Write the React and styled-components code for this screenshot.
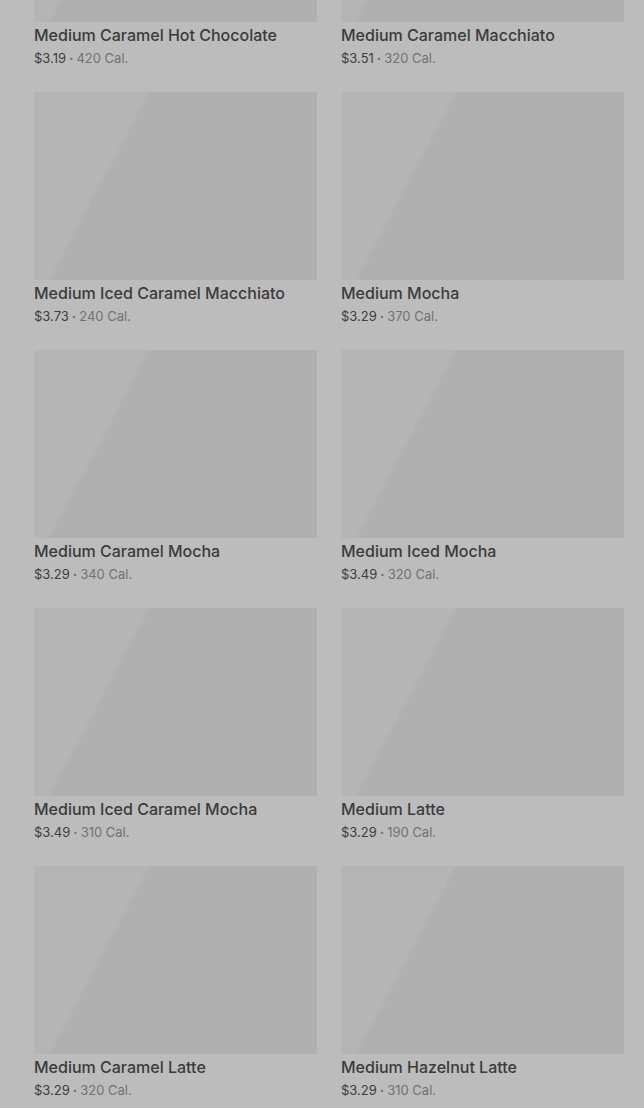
import React from "react"
import styled, { createGlobalStyle } from "styled-components"

const GlobalStyle = createGlobalStyle`
  html, body {
    margin: 0;
    padding: 0;
    background: #bcbcbc;
  }
  body {
    font-family: Inter, "Noto Sans", "Liberation Sans", sans-serif;
    -webkit-font-smoothing: antialiased;
  }
`

const Page = styled.div`
  height: 1108px;
  overflow: hidden;
  background: #bcbcbc;
`

const Grid = styled.div`
  display: grid;
  grid-template-columns: 283px 283px;
  column-gap: 24px;
  row-gap: 24px;
  padding: 0 20px 0 34px;
  margin-top: -166px;
`

const Card = styled.div`
  display: flex;
  flex-direction: column;
`

const Thumb = styled.div`
  height: 188px;
  background: linear-gradient(118deg, #b5b5b5 0%, #b5b5b5 29.5%, #b0b0b0 30.5%, #b0b0b0 100%);
`

const Title = styled.div`
  margin-top: 3px;
  font-size: 16px;
  line-height: 20px;
  font-weight: 500;
  color: #3b3b3b;
  white-space: nowrap;
`

const Meta = styled.div`
  margin-top: 3px;
  font-size: 13px;
  line-height: 20px;
  color: #727272;
  white-space: nowrap;
`

const Price = styled.span`
  color: #3e3e3e;
`

const Dot = styled.span`
  margin: 0 3px;
  font-weight: 700;
`

const items = [
  { name: "Medium Caramel Hot Chocolate", price: "$3.19", cal: "420 Cal." },
  { name: "Medium Caramel Macchiato", price: "$3.51", cal: "320 Cal." },
  { name: "Medium Iced Caramel Macchiato", price: "$3.73", cal: "240 Cal." },
  { name: "Medium Mocha", price: "$3.29", cal: "370 Cal." },
  { name: "Medium Caramel Mocha", price: "$3.29", cal: "340 Cal." },
  { name: "Medium Iced Mocha", price: "$3.49", cal: "320 Cal." },
  { name: "Medium Iced Caramel Mocha", price: "$3.49", cal: "310 Cal." },
  { name: "Medium Latte", price: "$3.29", cal: "190 Cal." },
  { name: "Medium Caramel Latte", price: "$3.29", cal: "320 Cal." },
  { name: "Medium Hazelnut Latte", price: "$3.29", cal: "310 Cal." },
]

export default function App() {
  return (
    <Page>
      <GlobalStyle />
      <Grid>
        {items.map((item) => (
          <Card key={item.name}>
            <Thumb />
            <Title>{item.name}</Title>
            <Meta>
              <Price>{item.price}</Price>
              <Dot>·</Dot>
              {item.cal}
            </Meta>
          </Card>
        ))}
      </Grid>
    </Page>
  )
}
